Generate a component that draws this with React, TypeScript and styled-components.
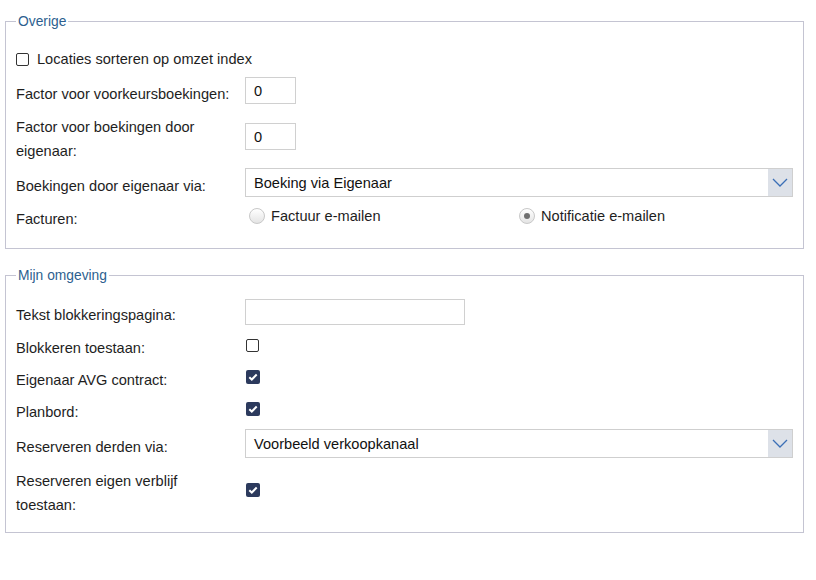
import * as React from 'react';
import styled, { createGlobalStyle } from 'styled-components';

const GlobalStyle = createGlobalStyle`
  body {
    margin: 0;
    background: #ffffff;
    font-family: 'Liberation Sans', Arial, sans-serif;
    font-size: 14.6px;
    color: #1e1e1e;
  }
`;

const Page = styled.div`
  padding: 14px 12px 0 5px;
  display: flex;
  flex-direction: column;
  gap: 19px;
`;

const Fieldset = styled.fieldset<{ $bottom: number }>`
  margin: 0;
  padding: 12px 10px ${(p) => p.$bottom}px 10px;
  border: 1px solid #c4c4d2;
  min-width: 0;
`;

const Legend = styled.legend`
  padding: 0 2px;
  font-size: 13.8px;
  line-height: 15px;
  color: #2d5f8f;
`;

const Row = styled.div<{ $top?: number; $bottom?: number }>`
  display: grid;
  grid-template-columns: 229px 1fr;
  align-items: center;
  padding: ${(p) => p.$top ?? 4}px 0 ${(p) => p.$bottom ?? 4}px;
`;

// text sits a little below the middle of its row
const Label = styled.div`
  line-height: 24px;
  padding: 3px 14px 0 0;
  margin-bottom: -3px;
`;

const InlineCheck = styled.label`
  display: flex;
  align-items: center;
  gap: 8px;
  line-height: 24px;
  grid-column: 1 / -1;
`;

const TextInput = styled.div<{ $width: number; $height: number }>`
  box-sizing: border-box;
  width: ${(p) => p.$width}px;
  height: ${(p) => p.$height}px;
  border: 1px solid #d0d0d0;
  padding: 1px 8px 0;
  display: flex;
  align-items: center;
  color: #111;
`;

const Select = styled.div`
  box-sizing: border-box;
  height: 29px;
  border: 1px solid #cfcfcf;
  display: flex;
  align-items: stretch;
`;

const SelectValue = styled.div`
  flex: 1;
  padding: 0 8px;
  display: flex;
  align-items: center;
  color: #111;
`;

const SelectArrow = styled.div`
  width: 24px;
  background: #dde1e8;
  display: flex;
  align-items: center;
  justify-content: center;
`;

const Box = styled.span<{ $checked?: boolean }>`
  box-sizing: border-box;
  width: ${(p) => (p.$checked ? 14 : 13)}px;
  height: ${(p) => (p.$checked ? 14 : 13)}px;
  border-radius: 2px;
  border: ${(p) => (p.$checked ? 'none' : '1px solid #333')};
  background: ${(p) => (p.$checked ? '#2c3a5d' : '#fff')};
  display: inline-flex;
  align-items: center;
  justify-content: center;
  flex: none;
`;

const CheckCell = styled.div`
  display: flex;
  align-items: center;
  padding-left: 1px;
`;

const RadioGroup = styled.div`
  display: grid;
  grid-template-columns: 270px 1fr;
`;

const RadioOption = styled.label`
  display: flex;
  align-items: center;
  gap: 6px;
  padding-left: 4px;
  line-height: 24px;
`;

const RadioDot = styled.span<{ $checked?: boolean }>`
  box-sizing: border-box;
  width: 16px;
  height: 16px;
  border-radius: 50%;
  border: 1px solid #c8c8c8;
  background: linear-gradient(#ffffff, #e4e4e4);
  display: inline-flex;
  align-items: center;
  justify-content: center;
  &::after {
    content: '';
    display: ${(p) => (p.$checked ? 'block' : 'none')};
    width: 6px;
    height: 6px;
    border-radius: 50%;
    background: #6f6f6f;
  }
`;

const Checkbox = ({ checked }: { checked?: boolean }) => (
  <Box $checked={checked}>
    {checked && (
      <svg width="10" height="8" viewBox="0 0 10 8">
        <path d="M1.3 4.2 L3.8 6.5 L8.7 1.5" fill="none" stroke="#fff" strokeWidth="2" />
      </svg>
    )}
  </Box>
);

const Dropdown = ({ value }: { value: string }) => (
  <Select>
    <SelectValue>{value}</SelectValue>
    <SelectArrow>
      <svg width="16" height="9" viewBox="0 0 16 9">
        <path d="M1 1 L8 8 L15 1" fill="none" stroke="#3b6fb6" strokeWidth="1.3" />
      </svg>
    </SelectArrow>
  </Select>
);

export default function App() {
  return (
    <Page>
      <GlobalStyle />
      <Fieldset $bottom={16}>
        <Legend>Overige</Legend>
        <Row $top={6} $bottom={2}>
          <InlineCheck>
            <Checkbox />
            Locaties sorteren op omzet index
          </InlineCheck>
        </Row>
        <Row>
          <Label>Factor voor voorkeursboekingen:</Label>
          <TextInput $width={51} $height={27}>0</TextInput>
        </Row>
        <Row>
          <Label>Factor voor boekingen door eigenaar:</Label>
          <TextInput $width={51} $height={27}>0</TextInput>
        </Row>
        <Row>
          <Label>Boekingen door eigenaar via:</Label>
          <Dropdown value="Boeking via Eigenaar" />
        </Row>
        <Row $top={3}>
          <Label>Facturen:</Label>
          <RadioGroup>
            <RadioOption>
              <RadioDot />
              Factuur e-mailen
            </RadioOption>
            <RadioOption>
              <RadioDot $checked />
              Notificatie e-mailen
            </RadioOption>
          </RadioGroup>
        </Row>
      </Fieldset>
      <Fieldset $bottom={14}>
        <Legend>Mijn omgeving</Legend>
        <Row>
          <Label>Tekst blokkeringspagina:</Label>
          <TextInput $width={220} $height={26} />
        </Row>
        <Row>
          <Label>Blokkeren toestaan:</Label>
          <CheckCell>
            <Checkbox />
          </CheckCell>
        </Row>
        <Row>
          <Label>Eigenaar AVG contract:</Label>
          <CheckCell>
            <Checkbox checked />
          </CheckCell>
        </Row>
        <Row>
          <Label>Planbord:</Label>
          <CheckCell>
            <Checkbox checked />
          </CheckCell>
        </Row>
        <Row>
          <Label>Reserveren derden via:</Label>
          <Dropdown value="Voorbeeld verkoopkanaal" />
        </Row>
        <Row>
          <Label>Reserveren eigen verblijf toestaan:</Label>
          <CheckCell>
            <Checkbox checked />
          </CheckCell>
        </Row>
      </Fieldset>
    </Page>
  );
}
